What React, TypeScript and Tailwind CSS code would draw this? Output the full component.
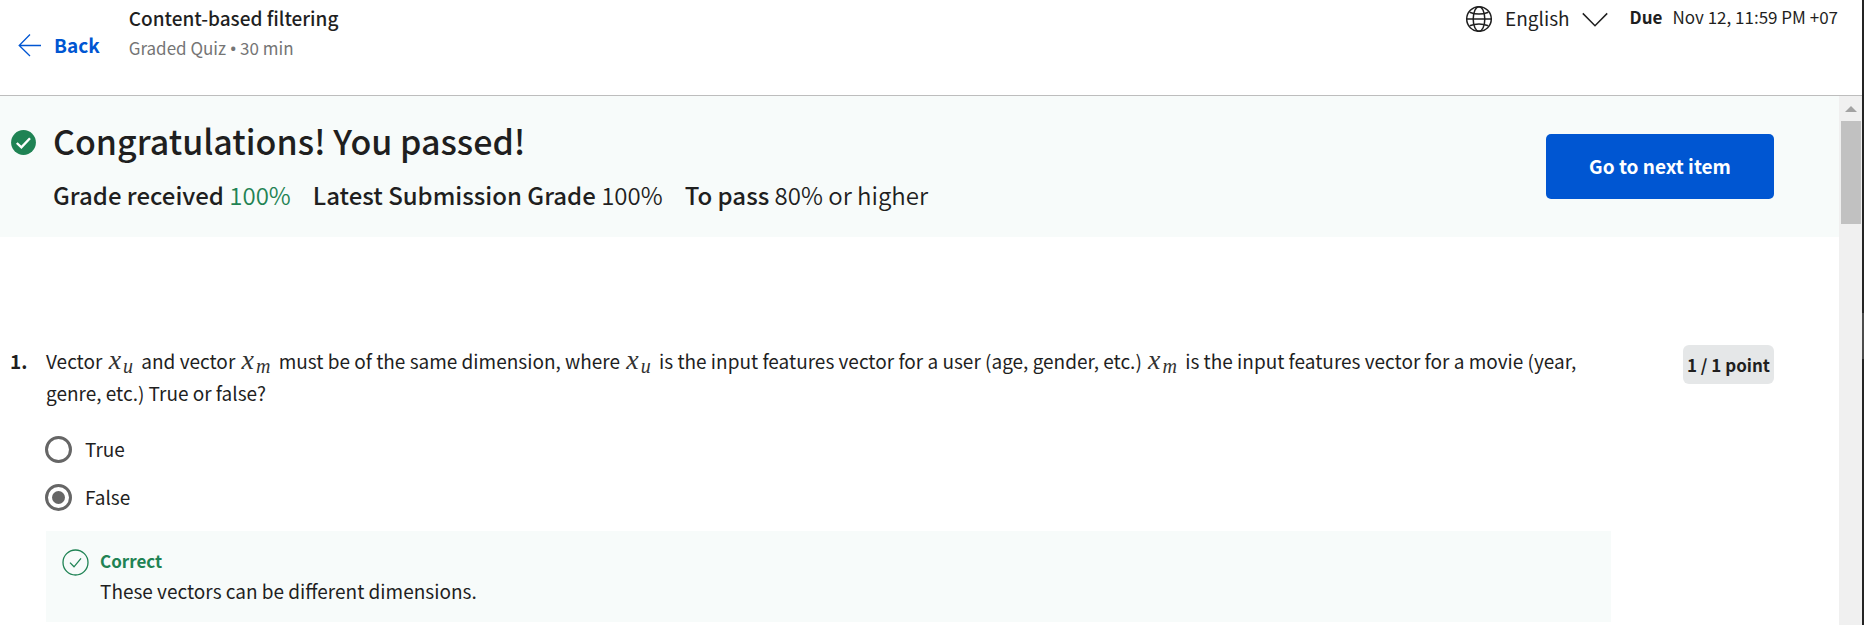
import React from "react";

function ArrowLeftIcon() {
  return (
    <svg width="24" height="24" viewBox="0 0 24 24" fill="none" stroke="currentColor" strokeWidth="1.3" aria-hidden="true">
      <path d="M23 12.5H1.5M12 1.5L1.2 12.5L12 23" />
    </svg>
  );
}

function GlobeIcon() {
  return (
    <svg width="28" height="28" viewBox="0 0 28 28" fill="none" stroke="currentColor" strokeWidth="1.5" aria-hidden="true">
      <circle cx="14" cy="15" r="12.3" />
      <ellipse cx="14" cy="15" rx="5.8" ry="12.3" />
      <path d="M1.7 15H26.3M4.6 8.2Q14 12 23.4 8.2M4.6 21.8Q14 18 23.4 21.8" />
    </svg>
  );
}

function ChevronDownIcon() {
  return (
    <svg width="26" height="20" viewBox="0 0 26 20" fill="none" stroke="currentColor" strokeWidth="1.5" aria-hidden="true">
      <path d="M0.8 5.4L13 17.8L25.2 5.4" />
    </svg>
  );
}

function PassedIcon() {
  return (
    <svg width="25" height="25" viewBox="0 0 25 25" fill="none" aria-hidden="true" className="shrink-0">
      <circle cx="12.5" cy="12.5" r="12.4" fill="#1f8354" />
      <path d="M5.8 13L10.4 17.4L19 8.2" stroke="white" strokeWidth="2.4" />
    </svg>
  );
}

function CorrectIcon() {
  return (
    <svg width="27" height="27" viewBox="0 0 27 27" fill="none" stroke="#1f8354" strokeWidth="1.3" aria-hidden="true" className="mt-0.5 shrink-0">
      <circle cx="13.5" cy="13.5" r="12.5" />
      <path d="M8 13.6L12 17.8L19 9.4" />
    </svg>
  );
}

function MathVar({ sub }: { sub: string }) {
  return (
    <span className="mr-1 ml-0.5 font-['Liberation_Serif',serif] text-[28px] leading-none text-[#333] italic">
      x<sub className="bottom-[-4px] ml-0.5 text-[20px] leading-none">{sub}</sub>
    </span>
  );
}

function Option({ label, checked }: { label: string; checked?: boolean }) {
  return (
    <label className="flex h-12 items-center gap-[13px]">
      <input
        type="radio"
        name="q1"
        defaultChecked={checked}
        className="grid size-[27px] appearance-none place-items-center rounded-full border-3 border-[#666] before:size-[13px] before:rounded-full checked:before:bg-[#666]"
      />
      {label}
    </label>
  );
}

export default function App() {
  return (
    <div className="flex h-screen overflow-hidden bg-white font-['Noto_Sans_CJK_SC',sans-serif] text-[19px] leading-8 text-[#1f1f1f]">
      <div className="flex min-w-0 flex-1 flex-col">
        <header className="flex h-24 shrink-0 items-start border-b border-[#bdbdbd] pr-6 pl-[18px]">
          <a href="#back" className="mt-[29px] flex items-center gap-3 font-bold text-[#0056d2]">
            <ArrowLeftIcon />
            Back
          </a>
          <div className="ml-[29px] pt-[3px]">
            <h1 className="leading-[30px] font-medium">Content-based filtering</h1>
            <p className="pt-px text-[17px] leading-7 text-[#757575]">
              Graded Quiz <span className="font-['Open_Sans',sans-serif] font-semibold">•</span> 30 min
            </p>
          </div>
          <div className="ml-auto flex items-start gap-[22px]">
            <button type="button" className="flex items-center gap-3 pt-0.5">
              <GlobeIcon />
              English
              <ChevronDownIcon />
            </button>
            <p className="flex gap-2.5 pt-px text-[17px]">
              <span className="font-bold">Due</span>
              <span>Nov 12, 11:59 PM +07</span>
            </p>
          </div>
        </header>

        <div className="flex min-h-0 flex-1">
          <main className="min-w-0 flex-1">
            <section className="flex items-center bg-[#f7fbfa] pr-[65px] pl-[11px]">
              <div className="flex items-start gap-[17px] pt-5 pb-6">
                <div className="pt-3.5">
                  <PassedIcon />
                </div>
                <div>
                  <h2 className="text-[34px] leading-[50px] font-medium">Congratulations! You passed!</h2>
                  <p className="flex gap-[22px] pt-[11px] text-2xl leading-9 font-[350]">
                    <span><span className="font-medium">Grade received</span> <span className="text-[#1f8354]">100%</span></span>
                    <span><span className="font-medium">Latest Submission Grade</span> 100%</span>
                    <span><span className="font-medium">To pass</span> 80% or higher</span>
                  </p>
                </div>
              </div>
              <button type="button" className="ml-auto h-[65px] w-[228px] rounded-[5px] bg-[#0056d2] pb-0.5 font-bold text-white">
                Go to next item
              </button>
            </section>

            <section className="flex items-start pt-[108px] pr-[65px] pl-2.5">
              <span className="w-9 font-bold">1.</span>
              <div className="min-w-0 flex-1">
                <p>
                  Vector <MathVar sub="u" /> and vector <MathVar sub="m" /> must be of the same dimension, where <MathVar sub="u" /> is the input features vector for a user (age, gender, etc.) <MathVar sub="m" /> is the input features vector for a movie (year, genre, etc.) True or false?
                </p>
                <fieldset className="-ml-px pt-4">
                  <Option label="True" />
                  <Option label="False" checked />
                </fieldset>
                <div className="mt-2.5 flex gap-[11px] bg-[#f7fbfa] px-4 pt-4 pb-4">
                  <CorrectIcon />
                  <div>
                    <p className="text-[17px] leading-7 font-bold text-[#1f8354]">Correct</p>
                    <p className="leading-[31px]">These vectors can be different dimensions.</p>
                  </div>
                </div>
              </div>
              <span className="ml-[72px] h-[39px] w-[91px] rounded-md bg-[#e5e7e8] text-center text-[17px] leading-[39px] font-bold">1 / 1 point</span>
            </section>
          </main>

          <div className="flex w-[23px] shrink-0 flex-col items-center bg-[#f0f0f0]" aria-hidden="true">
            <div className="flex h-[25px] items-center justify-center">
              <svg width="12" height="6" viewBox="0 0 12 6">
                <path d="M6 0L12 6H0Z" fill="#a3a3a3" />
              </svg>
            </div>
            <div className="h-[103px] w-5 bg-[#c1c1c1]" />
          </div>
        </div>
      </div>
      <div className="flex w-0.5 shrink-0 flex-col bg-[#242424]">
        <div className="mt-[313px] h-[46px] bg-[#4c4c4c]" />
      </div>
    </div>
  );
}
